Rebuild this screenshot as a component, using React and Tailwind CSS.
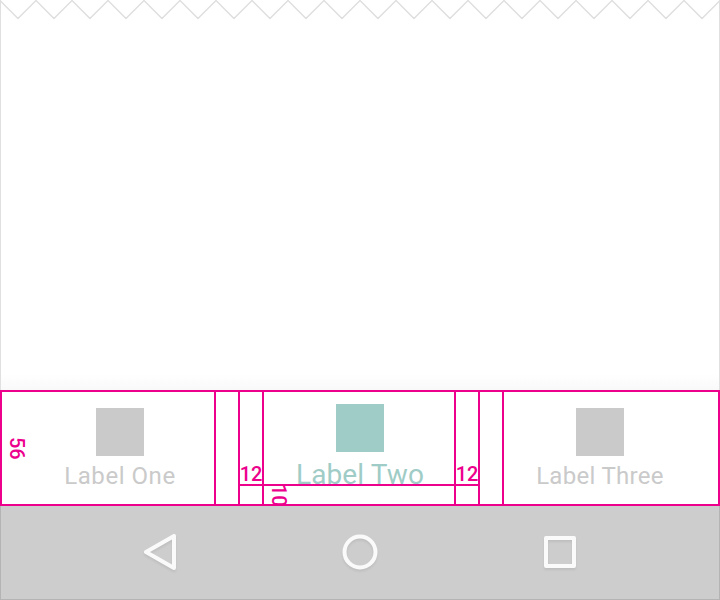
const zigzag = Array.from({ length: 41 }, (_, i) => `${i * 18},${i % 2 ? 18.5 : 0.5}`).join(' ');

function Tab({ label, className }) {
  return (
    <div className={`flex flex-1 flex-col items-center pt-4 ${className}`}>
      <div className="size-12 bg-[#cacaca]" />
      <span className="mt-1.5 text-[24px] leading-7 whitespace-nowrap text-[#cacaca]">{label}</span>
    </div>
  );
}

function Gutter({ value }) {
  return (
    <div className="flex w-6 shrink-0 border-r-2 border-[#ec008c]">
      {value && (
        <div className="flex w-full flex-col">
          <span className="mt-[70px] flex h-6 justify-center border-b-2 border-[#ec008c] text-[20px] leading-6 font-medium text-[#ec008c]">
            {value}
          </span>
        </div>
      )}
    </div>
  );
}

export default function App() {
  return (
    <div className="flex h-[600px] w-[720px] flex-col overflow-hidden bg-white font-[Roboto,sans-serif]">
      <div className="flex h-[390px] flex-col justify-between border-x border-[#e0e0e0]">
        <svg className="-mx-px block h-5 w-[720px]" viewBox="0 0 720 20" fill="none">
          <polyline points={zigzag} stroke="#dedede" strokeWidth="1.4" />
        </svg>
        <div className="h-4 bg-gradient-to-b from-white to-[#f9f9f9]" />
      </div>

      <div className="flex h-[116px] shrink-0 border-2 border-[#ec008c] bg-white">
        <div className="relative flex w-[214px] shrink-0 border-r-2 border-[#ec008c]">
          <Tab label="Label One" className="pl-6 tracking-[0.55px]" />
          <span className="absolute top-[45px] left-[3px] text-[20px] leading-6 font-medium text-[#ec008c] [writing-mode:vertical-rl]">56</span>
        </div>
        <Gutter />
        <Gutter value="12" />
        <div className="relative flex w-48 shrink-0 flex-col items-center border-r-2 border-[#ec008c] pt-3 pl-0.5">
          <div className="size-12 bg-[#9fccc6]" />
          <span className="mt-[7px] text-[28px] leading-8 tracking-[0.1px] whitespace-nowrap text-[#9fccc6]">Label Two</span>
          <div className="absolute top-[92px] left-0 h-0.5 w-full bg-[#ec008c]" />
          <span className="absolute top-[92px] left-[3px] text-[20px] leading-6 font-medium text-[#ec008c] [writing-mode:vertical-rl]">10</span>
        </div>
        <Gutter value="12" />
        <Gutter />
        <Tab label="Label Three" className="pr-[22px] tracking-[0.3px]" />
      </div>

      <div className="flex h-[94px] items-center justify-center gap-[152px] border-x border-b border-[#b4b4b4] bg-[#cdcdcd] pb-px">
        <svg className="size-12 drop-shadow-[0_2px_1px_rgba(0,0,0,0.07)]" viewBox="0 0 48 48" fill="none" stroke="#fafafa" strokeWidth="4" strokeLinejoin="round">
          <path d="M38 8V40L10 24Z" />
        </svg>
        <svg className="size-12 drop-shadow-[0_2px_1px_rgba(0,0,0,0.07)]" viewBox="0 0 48 48" fill="none" stroke="#fafafa" strokeWidth="4">
          <circle cx="24" cy="24" r="15.5" />
        </svg>
        <svg className="size-12 drop-shadow-[0_2px_1px_rgba(0,0,0,0.07)]" viewBox="0 0 48 48" fill="none" stroke="#fafafa" strokeWidth="4" strokeLinejoin="round">
          <rect x="10" y="10" width="28" height="28" />
        </svg>
      </div>
    </div>
  );
}
